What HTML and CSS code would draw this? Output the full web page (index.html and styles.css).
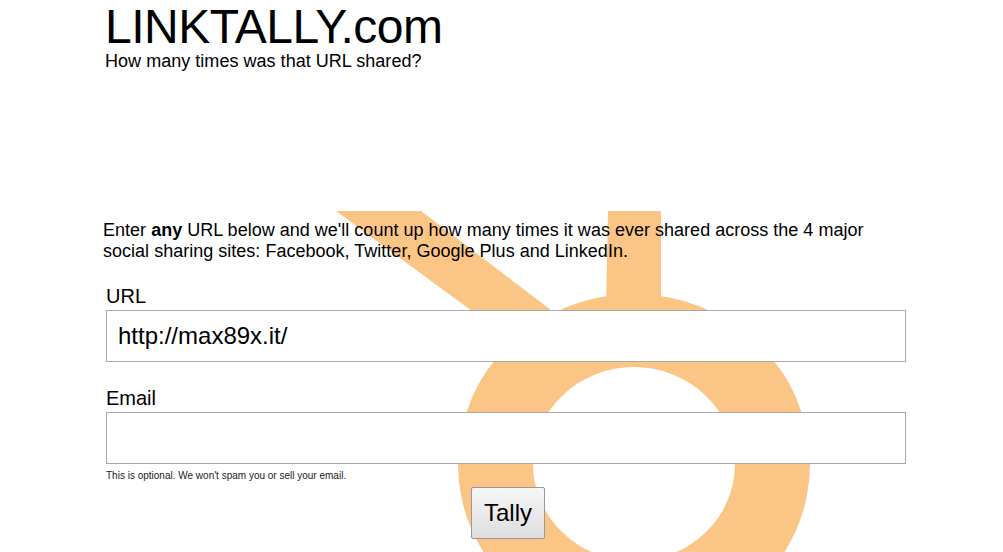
FILE: index.html
```html
<!DOCTYPE html>
<html lang="en">
<head>
  <meta charset="UTF-8">
  <title>LINKTALLY.com</title>
  <link rel="stylesheet" href="styles.css">
</head>
<body>
  <!-- big orange mark behind the form -->
  <svg class="mark" width="1003" height="341" viewBox="0 211 1003 341" aria-hidden="true">
    <polygon points="336,211 421,211 560,317 480,317"/>
    <polygon points="608,211 661,211 661,310 606,310"/>
    <path fill-rule="evenodd" d="M458,464a176,170 0 1,0 352,0a176,170 0 1,0 -352,0z M533,464a101,97 0 1,0 202,0a101,97 0 1,0 -202,0z"/>
  </svg>

  <div class="header">
    <h1>LINKTALLY.com</h1>
    <p class="tagline">How many times was that URL shared?</p>
  </div>

  <div class="container">
    <p class="intro">Enter <strong>any</strong> URL below and we'll count up how many times it was ever shared across the 4 major social sharing sites: Facebook, Twitter, Google Plus and LinkedIn.</p>

    <form class="tally-form">
      <label for="url">URL</label>
      <input type="text" id="url" value="http://max89x.it/">

      <label for="email" class="email-label">Email</label>
      <input type="text" id="email">
      <p class="hint">This is optional. We won't spam you or sell your email.</p>

      <button type="button">Tally</button>
    </form>
  </div>
</body>
</html>
```

FILE: styles.css
```css
html, body { height: 100%; }
body { font-family: 'Liberation Sans', Arial, sans-serif; color: #000; background: #fff; margin: 0; overflow: hidden; position: relative; }
.mark { position: absolute; left: 0; top: 211px; z-index: -1; fill: #fbc586; }
.header { padding: 0 0 0 105px; height: 211px; box-sizing: border-box; }
h1 { font-size: 48px; font-weight: normal; line-height: 54px; margin: 0; letter-spacing: -0.52px; }
.tagline { font-size: 18px; line-height: 21px; margin: -3px 0 0; letter-spacing: 0.03px; }
.container { padding: 0 0 0 103px; }
.intro { font-size: 18px; line-height: 21px; margin: 9px 0 0; width: 780px; letter-spacing: 0.015px; }
.tally-form { margin: 23px 0 0 3px; width: 800px; display: flex; flex-direction: column; }
label { font-size: 20px; line-height: 23px; margin-bottom: 2px; }
.email-label { margin-top: 25px; }
input { width: 100%; height: 52px; box-sizing: border-box; border: 1px solid #a9a9a9; background: #fff; padding: 0 11px; font-family: inherit; font-size: 24px; color: #000; border-radius: 0; outline: none; }
.hint { font-size: 10px; line-height: 12px; margin: 6px 0 0; color: #222; }
button { align-self: center; margin: 5px 0 0 4px; width: 74px; height: 52px; padding: 0; font-family: inherit; font-size: 24px; color: #000; border: 1px solid #999; border-radius: 2px; background: linear-gradient(#f6f6f6, #dedede); cursor: pointer; }
```
